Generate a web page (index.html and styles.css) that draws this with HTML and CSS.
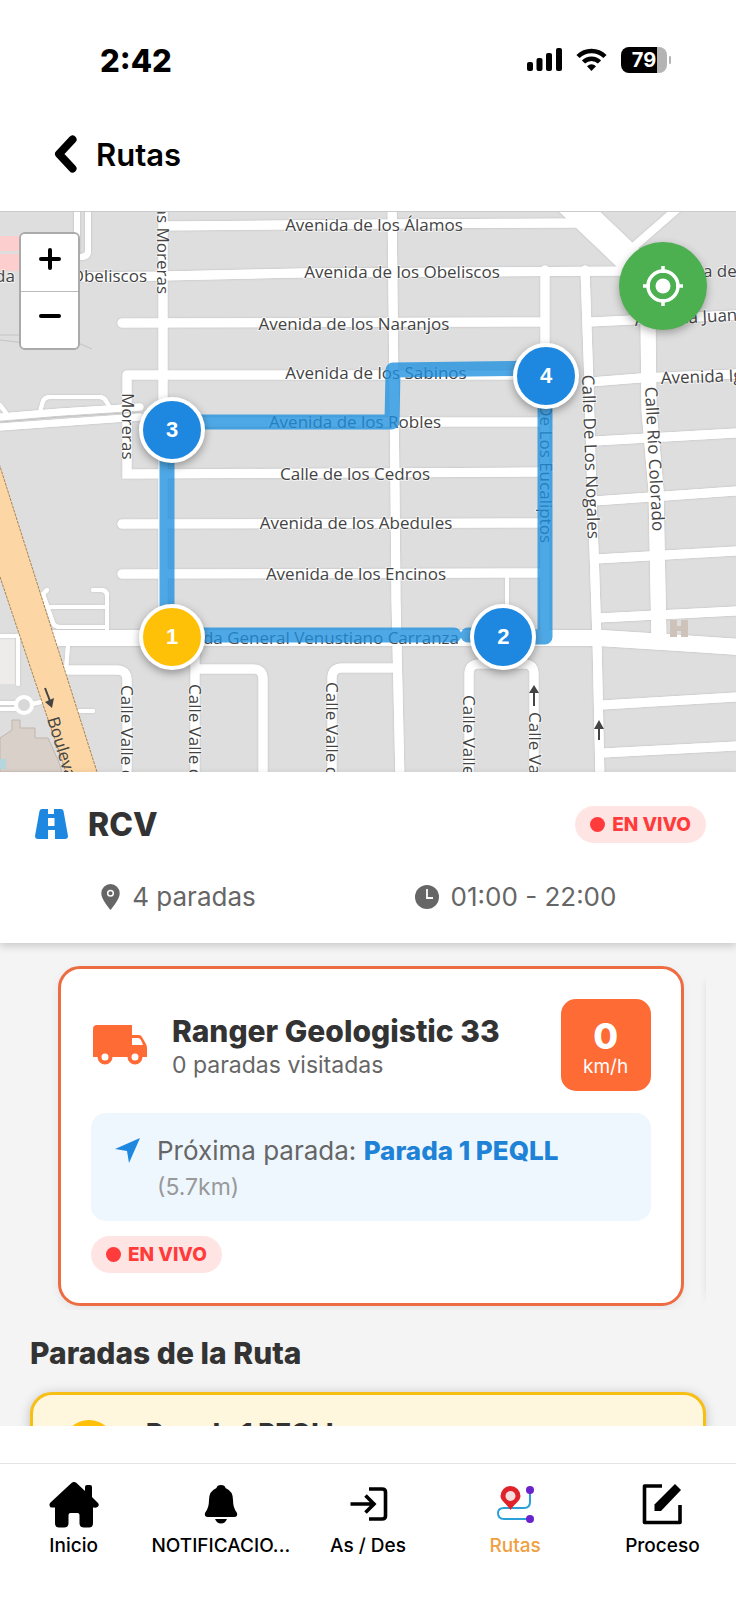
FILE: index.html
```html
<!DOCTYPE html>
<html lang="es">

<head>
    <meta charset="UTF-8" />
    <meta name="viewport" content="width=device-width, initial-scale=1">
    <title>Rutas</title>
    <link rel="stylesheet" href="styles.css">
</head>

<body>
    <!-- Status bar -->
    <div class="status-bar">
        <div class="status-time">2:42</div>
        <div class="status-icons">
            <svg class="icon-signal" width="35" height="24" viewBox="0 0 35 24">
                <rect x="0" y="14" width="6" height="9" rx="2" />
                <rect x="9.500" y="10" width="6" height="13" rx="2" />
                <rect x="19" y="5" width="6" height="18" rx="2" />
                <rect x="29" y="0" width="6" height="23" rx="2" />
            </svg>
            <svg class="icon-wifi" width="31" height="24" viewBox="0 0 31 24">
                <path d="M2 8.500C9.500 1 21.500 1 29 8.500" fill="none" stroke="#000" stroke-width="4.500" />
                <path d="M7.500 14C12 9.500 19 9.500 23.500 14" fill="none" stroke="#000" stroke-width="4.500" />
                <path d="M11 18.200Q15.500 14.500 20 18.200L15.500 23Z" />
            </svg>
            <div class="battery"><span class="battery-level">79</span></div>
        </div>
    </div>

    <header>
        <a href="#" class="back-link">
            <svg width="24" height="38" viewBox="0 0 24 38">
                <path d="M18.500 4.500L5 19L18.500 33.500" fill="none" stroke="#000" stroke-width="8" stroke-linecap="round" stroke-linejoin="round" />
            </svg>
            <span>Rutas</span>
        </a>
    </header>

    <main>
        <!-- Map -->
        <section class="map">
            <svg class="map-canvas" viewBox="0 212 736 560" preserveAspectRatio="xMidYMid slice">
                <defs>
                    <g id="roads">
                        <path d="M163 200V640M163 226L385 224L580 223M76 277L163 276L300 273L640 271M122 323L541 322M127 375H541M127 375V474L540 472M163 422H541M122 524L541 523M122 574L541 573" />
                        <path d="M392 200L395 490L396 600L400 780M545 270V640M585 270L589 385L592 500L594 550L597 640L600 780" stroke-width="9" />
                        <path d="M590 322L736 315M590 382L640 378L736 374M595 441L736 433M594 501L736 491M596 559L736 551M598 618L736 611M602 705L736 697M603 753L736 746" />
                        <path d="M63 670H117Q127 670 127 680V780M195 640V780M195 669H253Q263 669 263 679V780M332 780V678Q332 668 342 668H397M469 780V674Q469 664 479 664H524Q534 664 534 674V780" />
                        <path d="M648 320L649 410L656 490L659 640" stroke-width="15" />
                        <path d="M560 193L646 275V300" stroke-width="28" stroke-linejoin="round" />
                        <path d="M685 202L630 250" stroke-width="8" />
                        <path d="M50 638H600L680 643L740 647" stroke-width="16" />
                        <path d="M77 200V255M88 200V251Q88 257 80 257" stroke-width="6" />
                        <path d="M0 417L60 412L140 407M0 427L140 417" stroke-width="7" />
                    </g>
                    <g id="lanes">
                        <path d="M40 412L43 401Q45 397 50 397H99Q104 397 106 401L111 409M0 405L6 413" />
                        <path d="M47 590L43 594L53 623Q55 627 60 627H107M50 607H107M93 590H101Q107 590 107 596V635M68 645L66 670M75 711H93M507 573V620M0 636H18V684M0 703H16M0 709H16M32 704L41 702" />
                    </g>
                </defs>

                <rect class="land" x="0" y="212" width="736" height="560" />
                <rect class="area-pink" x="0" y="236" width="24" height="15" />
                <rect class="area-pink" x="0" y="254" width="24" height="17" />
                <path class="thin" d="M0 335H60L92 349M0 340L75 349" />
                <path class="area-building" d="M0 738L12 730V720H20V728H35V738H48L58 760L62 772H0Z" />
                <rect x="0" y="759" width="6" height="10" fill="#b5d6df" />
                <path d="M0 636H15V684H0Z" fill="#eeecea" />

                <use href="#lanes" class="lanes-case" />
                <use href="#roads" class="roads-case" />
                <use href="#lanes" class="lanes-fill" />
                <use href="#roads" class="roads-fill" />
                <path class="thin" d="M0 422L60 417L140 412" />
                <circle cx="24" cy="705" r="8" fill="#d8d8d8" stroke="#fff" stroke-width="4" />
                <path class="boulevard" d="M-2 460L97 772L98 780H69L66 772L38 690L-2 571Z" />
                <path d="M670 620H677V637H670ZM681 620H688V637H681ZM676 626H682V631H676Z" fill="#cdc3bb" />

                <g class="map-arrows">
                    <path d="M534 706V692M599 740V726" />
                    <path d="M529 693L534 685L539 693ZM594 729L599 720L604 729Z" fill="#444" stroke="none" />
                    <path d="M45 688L50 701" />
                    <path d="M45 702L54 698L52 708Z" fill="#444" stroke="none" />
                </g>

                <g class="map-labels">
                    <text x="374" y="231" text-anchor="middle">Avenida de los Álamos</text>
                    <text x="402" y="278" text-anchor="middle">Avenida de los Obeliscos</text>
                    <text x="354" y="330" text-anchor="middle">Avenida de los Naranjos</text>
                    <text x="376" y="379" text-anchor="middle">Avenida de los Sabinos</text>
                    <text x="355" y="428" text-anchor="middle">Avenida de los Robles</text>
                    <text x="355" y="480" text-anchor="middle">Calle de los Cedros</text>
                    <text x="356" y="529" text-anchor="middle">Avenida de los Abedules</text>
                    <text x="356" y="580" text-anchor="middle">Avenida de los Encinos</text>
                    <text x="459" y="644" text-anchor="end">Avenida General Venustiano Carranza</text>
                    <text x="147" y="282" text-anchor="end">Avenida de los Obeliscos</text>
                    <text x="649" y="277">Avenida de los</text>
                    <text transform="translate(635 326) rotate(-3)">Avenida Juan</text>
                    <text transform="translate(661 384) rotate(-2)">Avenida Ignacio</text>
                    <text transform="translate(157 294) rotate(90)" text-anchor="end">Calle Las Moreras</text>
                    <text transform="translate(122 393) rotate(90)">Moreras</text>
                    <text transform="translate(582 375) rotate(88)">Calle De Los Nogales</text>
                    <text transform="translate(645 387) rotate(87)">Calle Río Colorado</text>
                    <text transform="translate(540 543) rotate(90)" text-anchor="end">De Los Eucaliptos</text>
                    <text transform="translate(121 685) rotate(90)">Calle Valle del</text>
                    <text transform="translate(189 684) rotate(90)">Calle Valle del</text>
                    <text transform="translate(326 682) rotate(90)">Calle Valle del</text>
                    <text transform="translate(463 695) rotate(90)">Calle Valle del</text>
                    <text transform="translate(529 712) rotate(90)">Calle Valle del</text>
                    <text transform="translate(47 719) rotate(73)" class="label-plain">Boulevard</text>
                </g>

                <g class="route">
                    <path d="M167 636V430" />
                    <path d="M172 422H392L393 370L547 368" />
                    <path d="M545 375V637H503" />
                    <path d="M468 635H503" stroke-linecap="round" />
                    <path d="M172 635H454" stroke-linecap="round" />
                </g>
            </svg>

            <div class="zoom-control">
                <button type="button" aria-label="Acercar">
                    <svg width="22" height="22" viewBox="0 0 22 22"><path d="M11 2V20M2 11H20" /></svg>
                </button>
                <button type="button" aria-label="Alejar">
                    <svg width="22" height="22" viewBox="0 0 22 22"><path d="M2 11H20" /></svg>
                </button>
            </div>

            <button type="button" class="locate-btn" aria-label="Mi ubicación">
                <svg width="40" height="40" viewBox="0 0 40 40">
                    <circle cx="20" cy="20" r="7.500" fill="#fff" />
                    <circle cx="20" cy="20" r="15" fill="none" stroke="#fff" stroke-width="3.500" />
                    <path d="M20 0V7M20 33V40M0 20H7M33 20H40" stroke="#fff" stroke-width="3.500" />
                </svg>
            </button>

            <button type="button" class="pin pin-1">1</button>
            <button type="button" class="pin pin-2">2</button>
            <button type="button" class="pin pin-3">3</button>
            <button type="button" class="pin pin-4">4</button>
        </section>

        <!-- Route summary -->
        <section class="route-info">
            <div class="route-head">
                <svg width="33" height="30" viewBox="0 0 33 30">
                    <path d="M7 0H13V5H19V0H26Q28 0 28.500 2L33 27Q33 30 30 30H20V21H13V30H3Q0 30 0 27L4.500 2Q5 0 7 0ZM13 9V17H19.500V9Z" fill="#1e88e0" fill-rule="evenodd" />
                </svg>
                <h1>RCV</h1>
                <span class="live-badge">EN VIVO</span>
            </div>
            <div class="route-stats">
                <div>
                    <svg width="19" height="26" viewBox="0 0 19 26">
                        <path d="M9.500 0A9.200 9.200 0 0 1 18.700 9.200C18.700 15 12.500 22 9.500 26C6.500 22 .3 15 .3 9.200A9.200 9.200 0 0 1 9.500 0Z" fill="#666" />
                        <circle cx="9.500" cy="9.200" r="2.800" fill="#666" stroke="#fff" stroke-width="1.500" />
                    </svg>
                    4 paradas
                </div>
                <div>
                    <svg width="24" height="24" viewBox="0 0 24 24">
                        <circle cx="12" cy="12" r="12" fill="#666" />
                        <path d="M12 4V13H18" fill="none" stroke="#fff" stroke-width="1.800" />
                    </svg>
                    01:00 - 22:00
                </div>
            </div>
        </section>

        <!-- Vehicles -->
        <section class="vehicles">
            <article class="vehicle-card">
                <div class="vehicle-head">
                    <svg width="54" height="40" viewBox="0 0 54 40">
                        <path d="M4 0H39V10H46Q48 10 49 12L53 19Q54 21 54 23V32H0V4Q0 0 4 0Z" fill="#ff6b35" />
                        <path d="M39 13H45Q47 13 48 15L50 20H39Z" fill="#fff" />
                        <circle cx="12" cy="32" r="5.500" fill="#fff" stroke="#ff6b35" stroke-width="4" />
                        <circle cx="42" cy="32" r="5.500" fill="#fff" stroke="#ff6b35" stroke-width="4" />
                    </svg>
                    <div class="vehicle-name">
                        <h2>Ranger Geologistic 33</h2>
                        <p>0 paradas visitadas</p>
                    </div>
                    <div class="speed">
                        <strong>0</strong>
                        <span>km/h</span>
                    </div>
                </div>
                <div class="next-stop">
                    <svg width="26" height="26" viewBox="0 0 26 26">
                        <path d="M25 0L14 25L12 13L0 11Z" fill="#1e88e0" />
                    </svg>
                    <div>
                        <p>Próxima parada: <strong>Parada 1 PEQLL</strong></p>
                        <p class="distance">(5.7km)</p>
                    </div>
                </div>
                <span class="live-badge">EN VIVO</span>
            </article>
            <article class="vehicle-card vehicle-card-idle"></article>
        </section>

        <!-- Stops -->
        <section class="stops">
            <h2>Paradas de la Ruta</h2>
            <div class="stop-card">
                <span class="stop-number">1</span>
                <span>Parada 1 PEQLL</span>
            </div>
        </section>
    </main>

    <nav class="tab-bar">
        <a href="#">
            <svg width="50" height="46" viewBox="0 0 50 46">
                <path d="M25 0Q26.500 0 27.500 1L36 9V5Q36 3 38 3H41Q43 3 43 5V15L49 21Q50.500 23 49 24.500Q48 26 45 25.500H44V41Q44 45.500 40 45.500H35Q30.500 45.500 30.500 41V33Q30.500 31 28.500 31H21.500Q19.500 31 19.500 33V41Q19.500 45.500 15 45.500H10Q6 45.500 6 41V25.500H4Q1 26 .7 24Q0 22 1.500 20.500L22.500 1Q23.500 0 25 0Z" />
            </svg>
            <span>Inicio</span>
        </a>
        <a href="#">
            <svg width="50" height="46" viewBox="0 0 50 46">
                <path d="M25 3Q29 3 29.500 6Q37 9 37 18Q37 26 41 31Q42 35 38 35H12Q8 35 9 31Q13 26 13 18Q13 9 20.500 6Q21 3 25 3ZM19 37H31Q29 41.500 25 41.500Q21 41.500 19 37Z" />
            </svg>
            <span>NOTIFICACIO...</span>
        </a>
        <a href="#">
            <svg width="50" height="46" viewBox="0 0 50 46">
                <path d="M26 7H39Q42.500 7 42.500 10V34Q42.500 37 39 37H26M7.500 22H31M22.500 13.500L31 22L22.500 30.500" fill="none" stroke="#000" stroke-width="3.600" />
            </svg>
            <span>As / Des</span>
        </a>
        <a href="#" class="active">
            <svg width="50" height="46" viewBox="0 0 50 46">
                <path d="M40 8V20Q40 26 34 26H14Q8 26 8 31Q8 37 14 37H40" fill="none" stroke="#2a9fd8" stroke-width="2" />
                <path d="M20.500 4A10 10 0 0 1 30.500 14C30.500 19 24 22 20.500 28C17 22 10.500 19 10.500 14A10 10 0 0 1 20.500 4Z" fill="#e0222a" />
                <circle cx="20.500" cy="14" r="5" fill="#f4dede" />
                <circle cx="40" cy="8" r="4" fill="#6a22cc" />
                <circle cx="40" cy="37" r="4" fill="#6a22cc" />
            </svg>
            <span>Rutas</span>
        </a>
        <a href="#">
            <svg width="50" height="46" viewBox="0 0 50 46">
                <path d="M25 4H7.500V40.500H43V23" fill="none" stroke="#000" stroke-width="3.600" stroke-linejoin="round" />
                <path d="M38 2L44 8L24 29H17.500V22.500Z" />
            </svg>
            <span>Proceso</span>
        </a>
    </nav>
</body>

</html>
```

FILE: styles.css
```css
* {
    box-sizing: border-box;
}

html,
body {
    margin: 0;
    padding: 0;
    height: 100%;
}

body {
    display: flex;
    flex-direction: column;
    overflow: hidden;
    background: #fff;
    color: #000;
    font-family: Inter, "Liberation Sans", sans-serif;
}

h1,
h2,
p {
    margin: 0;
}

button {
    padding: 0;
    border: none;
    cursor: pointer;
}

svg {
    flex-shrink: 0;
}

/* Status bar */
.status-bar {
    display: flex;
    flex-shrink: 0;
    justify-content: space-between;
    align-items: center;
    height: 120px;
    padding: 0 65px 0 100px;
}

.status-time {
    font-size: 31px;
    font-weight: 800;
}

.status-icons {
    display: flex;
    align-items: center;
    gap: 14px;
}

.battery {
    position: relative;
    width: 46px;
    height: 26px;
    margin-right: 4px;
    border-radius: 8px;
    background: linear-gradient(to right, #000 79%, #b4b4b4 79%);
    color: #fff;
    font-size: 20px;
    font-weight: 700;
    line-height: 26px;
    text-align: center;
}

.battery::after {
    content: "";
    position: absolute;
    top: 9px;
    right: -4px;
    width: 2px;
    height: 8px;
    border-radius: 2px;
    background: #b4b4b4;
}

/* Header */
header {
    flex-shrink: 0;
    padding: 14px 54px 37px;
    border-bottom: 1px solid #ccc;
}

.back-link {
    display: flex;
    align-items: center;
    gap: 18px;
    height: 40px;
    color: #000;
    font-size: 31px;
    font-weight: 600;
    text-decoration: none;
}

main {
    flex: 1;
    min-height: 0;
    overflow: hidden;
    background: #f4f4f4;
}

/* Map */
.map {
    position: relative;
    aspect-ratio: 736 / 560;
    overflow: hidden;
}

.map-canvas {
    display: block;
    width: 100%;
    height: 100%;
}

.land {
    fill: #dedede;
}

.area-pink {
    fill: #fccfce;
}

.area-building {
    fill: #d9d0c9;
    stroke: #c2b6ad;
}

.thin {
    fill: none;
    stroke: #c4c4c4;
}

.roads-case,
.roads-fill,
.lanes-case,
.lanes-fill {
    fill: none;
    stroke: #fff;
    stroke-width: 9px;
    stroke-linecap: round;
}

.roads-case {
    filter: drop-shadow(0 0 1px #b8b8b8);
}

.lanes-case,
.lanes-fill {
    stroke-width: 4px;
}

.lanes-case {
    filter: drop-shadow(0 0 1px #c4c4c4);
}

.boulevard {
    fill: #fcd6a4;
    stroke: #a98352;
    stroke-dasharray: 3 1;
}

.map-arrows {
    fill: none;
    stroke: #444;
    stroke-width: 2px;
}

.map-labels {
    fill: #444;
    stroke: rgba(255, 255, 255, 0.6);
    stroke-width: 2px;
    paint-order: stroke;
    font-family: "Open Sans", "Noto Sans", sans-serif;
    font-size: 17px;
}

.label-plain {
    stroke: none;
}

.route {
    fill: none;
    stroke: #1e90e0;
    stroke-width: 15px;
    stroke-linejoin: round;
    opacity: 0.78;
}

.zoom-control {
    position: absolute;
    top: 20px;
    left: 19px;
    display: flex;
    flex-direction: column;
    border: 2px solid #aaa;
    border-radius: 6px;
    overflow: hidden;
}

.zoom-control button {
    display: flex;
    justify-content: center;
    align-items: center;
    width: 57px;
    height: 57px;
    padding-bottom: 8px;
    background: #fff;
}

.zoom-control button + button {
    border-top: 1px solid #bbb;
}

.zoom-control path {
    stroke: #000;
    stroke-width: 4px;
    stroke-linecap: round;
}

.locate-btn {
    position: absolute;
    top: 30px;
    right: 29px;
    display: flex;
    justify-content: center;
    align-items: center;
    width: 88px;
    height: 88px;
    border-radius: 50%;
    background: #4caf50;
    box-shadow: 0 3px 8px rgba(0, 0, 0, 0.3);
}

.pin {
    position: absolute;
    width: 66px;
    height: 66px;
    border: 4px solid #fff;
    border-radius: 50%;
    background: #1e88e0;
    box-shadow: 0 3px 8px rgba(0, 0, 0, 0.35);
    color: #fff;
    font-family: "Liberation Sans", Arial, sans-serif;
    font-size: 22px;
    font-weight: 700;
    transform: translate(-50%, -50%);
}

.pin-1 {
    left: 23.4%;
    top: 75.9%;
    background: #ffc107;
}

.pin-2 {
    left: 68.4%;
    top: 75.9%;
}

.pin-3 {
    left: 23.4%;
    top: 39%;
}

.pin-4 {
    left: 74.2%;
    top: 29.2%;
}

/* Route summary */
.route-info {
    position: relative;
    padding: 30px 30px 31px;
    background: #fff;
    box-shadow: 0 3px 8px rgba(0, 0, 0, 0.18);
}

.route-head {
    display: flex;
    align-items: center;
    height: 44px;
    padding-left: 5px;
}

.route-head h1 {
    flex: 1;
    margin-left: 20px;
    color: #333;
    font-size: 32px;
    font-weight: 800;
}

.live-badge {
    display: inline-flex;
    align-items: center;
    gap: 7px;
    height: 37px;
    padding: 0 15px;
    border-radius: 19px;
    background: #ffe4e4;
    color: #ff3b3b;
    font-size: 19px;
    font-weight: 800;
    white-space: nowrap;
}

.live-badge::before {
    content: "";
    width: 15px;
    height: 15px;
    border-radius: 50%;
    background: #ff3b3b;
}

.route-stats {
    display: grid;
    grid-template-columns: 1fr 1fr;
    margin: 36px 22px 0 -20px;
    color: #666;
    font-size: 26px;
    line-height: 30px;
}

.route-stats div {
    display: flex;
    justify-content: center;
    align-items: center;
    gap: 12px;
}

/* Vehicles */
.vehicles {
    display: flex;
    gap: 24px;
    margin: 0 30px;
    padding: 23px 28px 4px;
    overflow: hidden;
}

.vehicle-card {
    flex: 0 0 85vw;
    padding: 30px;
    border: 3px solid #ed6c42;
    border-radius: 22px;
    background: #fff;
    box-shadow: 0 3px 10px rgba(0, 0, 0, 0.06);
}

.vehicle-card-idle {
    border-color: #fff;
    box-shadow: 0 3px 10px rgba(0, 0, 0, 0.15);
}

.vehicle-head {
    display: flex;
    align-items: center;
    padding-left: 2px;
}

.vehicle-name {
    flex: 1;
    margin-left: 25px;
}

.vehicle-name h2 {
    padding-top: 4px;
    color: #333;
    font-size: 30px;
    font-weight: 800;
    line-height: 36px;
}

.vehicle-name p {
    color: #666;
    font-size: 23px;
    line-height: 32px;
}

.speed {
    display: flex;
    flex-direction: column;
    align-items: center;
    min-width: 90px;
    padding: 16px 15px 14px;
    border-radius: 15px;
    background: #ff6b35;
    color: #fff;
}

.speed strong {
    font-size: 36px;
    font-weight: 800;
    line-height: 42px;
}

.speed span {
    font-size: 19px;
    line-height: 20px;
}

.next-stop {
    display: flex;
    gap: 16px;
    margin: 22px 0 15px;
    padding: 19px 24px 15px;
    border-radius: 15px;
    background: #eef7fe;
    color: #666;
    font-size: 26px;
    line-height: 37px;
}

.next-stop svg {
    margin-top: 6px;
}

.next-stop strong {
    color: #1e82d6;
    font-weight: 800;
}

.next-stop .distance {
    color: #999;
    font-size: 23px;
}

/* Stops */
.stops {
    padding: 25px 30px 0;
}

.stops h2 {
    color: #333;
    font-size: 30px;
    font-weight: 800;
    line-height: 36px;
}

.stop-card {
    display: flex;
    gap: 31px;
    height: 180px;
    margin-top: 21px;
    padding: 25px 30px;
    border: 3px solid #f7bf14;
    border-radius: 22px;
    background: #fff6de;
    box-shadow: 0 2px 12px rgba(0, 0, 0, 0.22);
    color: #333;
    font-size: 26px;
    font-weight: 800;
    line-height: 26px;
}

.stop-number {
    width: 52px;
    height: 52px;
    border-radius: 50%;
    background: #ffc107;
    color: #fff;
    line-height: 52px;
    text-align: center;
}

/* Bottom tabs */
.tab-bar {
    display: grid;
    grid-template-columns: repeat(5, 1fr);
    flex-shrink: 0;
    padding: 18px 0 42px;
    background: linear-gradient(#e4e4e4, #e4e4e4) 0 37px / 100% 1px no-repeat #fff;
}

.tab-bar a {
    display: flex;
    flex-direction: column;
    align-items: center;
    gap: 5px;
    padding-top: 38px;
    color: #000;
    font-size: 19px;
    font-weight: 500;
    line-height: 25px;
    text-decoration: none;
}

.tab-bar .active {
    color: #f0a040;
}
```
